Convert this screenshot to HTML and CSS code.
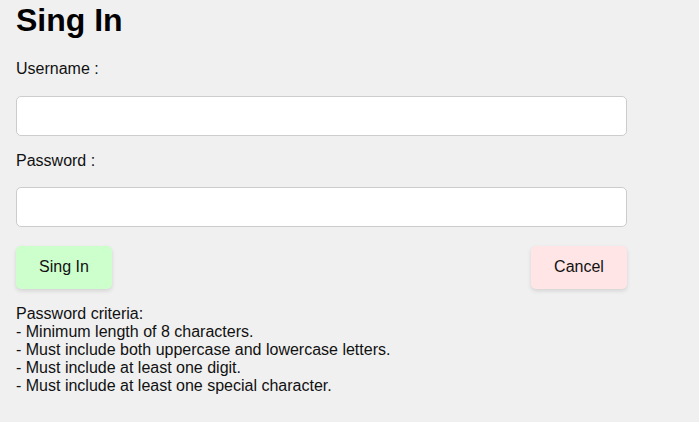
FILE: index.html
```html
<!DOCTYPE html>
<html>
<head>
<meta charset="utf-8">
<link rel="stylesheet" href="styles.css">
</head>
<body>
<div class="page">
  <h1 class="title">Sing In</h1>
  <form class="form">
    <label class="label" for="u">Username :</label>
    <input class="field" id="u" type="text">
    <label class="label label-2" for="p">Password :</label>
    <input class="field" id="p" type="password">
    <div class="actions">
      <button type="button" class="btn btn-ok">Sing In</button>
      <button type="button" class="btn btn-cancel">Cancel</button>
    </div>
  </form>
  <p class="criteria">Password criteria:<br>- Minimum length of 8 characters.<br>- Must include both uppercase and lowercase letters.<br>- Must include at least one digit.<br>- Must include at least one special character.</p>
</div>
</body>
</html>
```
FILE: styles.css
```css
html, body {
  margin: 0;
  padding: 0;
  background: #f0f0f0;
}
body {
  font-family: "Liberation Sans", Arial, sans-serif;
  font-size: 16px;
  color: #111;
}
.page {
  padding: 2px 16px 0;
  width: 611px;
}
.title {
  margin: 0;
  font-size: 32px;
  font-weight: bold;
  color: #000;
}
.form {
  display: flex;
  flex-direction: column;
  margin-top: 21px;
}
.label {
  display: block;
  line-height: normal;
}
.label-2 {
  margin-top: 16px;
}
.field {
  box-sizing: border-box;
  width: 611px;
  height: 40px;
  margin-top: 17.5px;
  border: 1px solid #ccc;
  border-radius: 5px;
  background: #fff;
  padding: 0 10px;
  font: inherit;
}
.actions {
  display: flex;
  justify-content: space-between;
  margin-top: 18.5px;
}
.btn {
  width: 96px;
  height: 43px;
  border: none;
  border-radius: 5px;
  font-family: "Liberation Sans", Arial, sans-serif;
  font-size: 16px;
  color: #111;
  box-shadow: 0 2px 4px rgba(0, 0, 0, 0.12);
  padding: 0;
}
.btn-ok {
  background: #ccffcc;
}
.btn-cancel {
  background: #ffe5e5;
}
.criteria {
  margin: 16px 0 0;
  line-height: normal;
}
```
